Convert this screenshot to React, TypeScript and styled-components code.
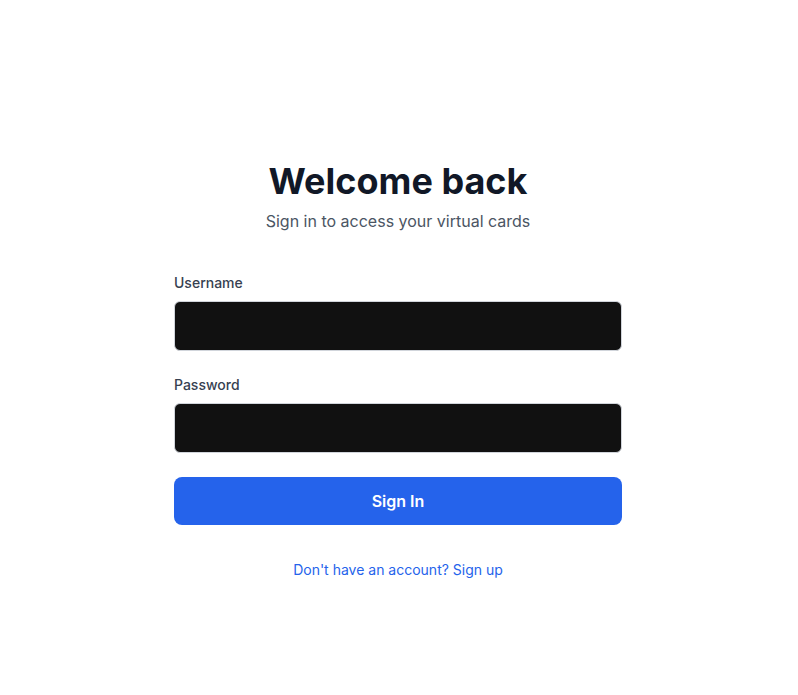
import React from "react";
import styled, { createGlobalStyle } from "styled-components";

const GlobalStyle = createGlobalStyle`
  html, body {
    margin: 0;
    padding: 0;
    background: #ffffff;
    font-family: Inter, "Noto Sans", "Liberation Sans", sans-serif;
  }
  * { box-sizing: border-box; }
`;

const Page = styled.main`
  min-height: 695px;
  display: flex;
  justify-content: center;
  padding-top: 161px;
  padding-right: 2px;
`;

const Card = styled.div`
  width: 448px;
  display: flex;
  flex-direction: column;
`;

const Header = styled.header`
  display: flex;
  flex-direction: column;
  align-items: center;
  gap: 8px;
  margin-bottom: 40px;
`;

const Title = styled.h1`
  margin: 0;
  font-size: 36px;
  line-height: 40px;
  font-weight: 700;
  color: #111827;
`;

const Subtitle = styled.p`
  margin: 0;
  font-size: 16px;
  line-height: 24px;
  color: #4b5563;
`;

const Form = styled.form`
  display: flex;
  flex-direction: column;
  gap: 24px;
`;

const Field = styled.div`
  display: flex;
  flex-direction: column;
  gap: 8px;
`;

const Label = styled.label`
  font-size: 14px;
  line-height: 20px;
  font-weight: 500;
  color: #374151;
`;

const Input = styled.input`
  height: 50px;
  width: 100%;
  padding: 12px 16px;
  border: 1px solid #d1d5db;
  border-radius: 6px;
  background: #111111;
  color: #ffffff;
  font-family: inherit;
  font-size: 16px;
  outline: none;
`;

const Button = styled.button`
  height: 48px;
  width: 100%;
  border: none;
  border-radius: 8px;
  background: #2563eb;
  color: #ffffff;
  font-family: inherit;
  font-size: 16px;
  font-weight: 600;
  cursor: pointer;
`;

const Footer = styled.p`
  margin: 35px 0 0;
  text-align: center;
  font-size: 14px;
  line-height: 20px;
`;

const Link = styled.a`
  color: #2563eb;
  text-decoration: none;
`;

export default function App() {
  return (
    <>
      <GlobalStyle />
      <Page>
        <Card>
          <Header>
            <Title>Welcome back</Title>
            <Subtitle>Sign in to access your virtual cards</Subtitle>
          </Header>
          <Form onSubmit={(e) => e.preventDefault()}>
            <Field>
              <Label htmlFor="username">Username</Label>
              <Input id="username" type="text" />
            </Field>
            <Field>
              <Label htmlFor="password">Password</Label>
              <Input id="password" type="password" />
            </Field>
            <Button type="submit">Sign In</Button>
          </Form>
          <Footer>
            <Link href="#">Don't have an account? Sign up</Link>
          </Footer>
        </Card>
      </Page>
    </>
  );
}
